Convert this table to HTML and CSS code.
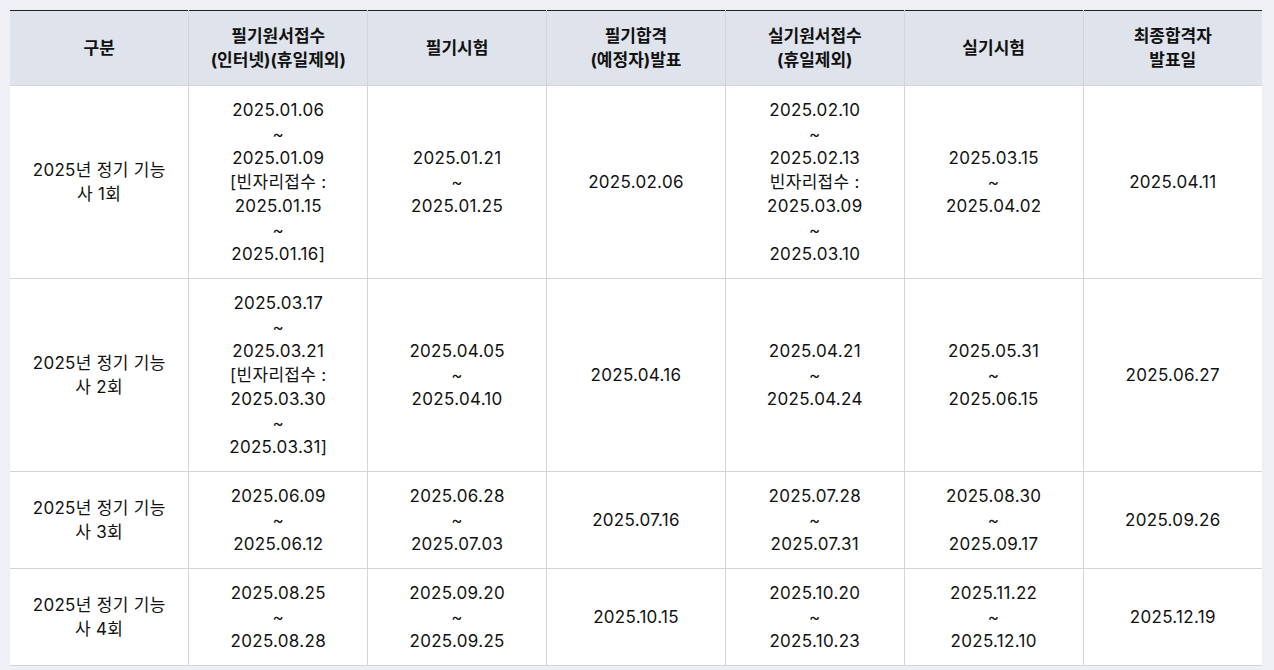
FILE: index.html
```html
<!DOCTYPE html>
<html lang="ko">
<head>
<meta charset="utf-8">
<link rel="stylesheet" href="styles.css">
</head>
<body>
<div class="wrap">
<table class="sched">
  <thead>
    <tr>
      <th>구분</th>
      <th>필기원서접수<br>(인터넷)(휴일제외)</th>
      <th>필기시험</th>
      <th>필기합격<br>(예정자)발표</th>
      <th>실기원서접수<br>(휴일제외)</th>
      <th>실기시험</th>
      <th>최종합격자<br>발표일</th>
    </tr>
  </thead>
  <tbody>
    <tr>
      <td>2025년 정기 기능사 1회</td>
      <td>2025.01.06<br>~<br>2025.01.09<br>[빈자리접수 : 2025.01.15<br>~<br>2025.01.16]</td>
      <td>2025.01.21<br>~<br>2025.01.25</td>
      <td>2025.02.06</td>
      <td>2025.02.10<br>~<br>2025.02.13<br>빈자리접수 : 2025.03.09<br>~<br>2025.03.10</td>
      <td>2025.03.15<br>~<br>2025.04.02</td>
      <td>2025.04.11</td>
    </tr>
    <tr>
      <td>2025년 정기 기능사 2회</td>
      <td>2025.03.17<br>~<br>2025.03.21<br>[빈자리접수 : 2025.03.30<br>~<br>2025.03.31]</td>
      <td>2025.04.05<br>~<br>2025.04.10</td>
      <td>2025.04.16</td>
      <td>2025.04.21<br>~<br>2025.04.24</td>
      <td>2025.05.31<br>~<br>2025.06.15</td>
      <td>2025.06.27</td>
    </tr>
    <tr>
      <td>2025년 정기 기능사 3회</td>
      <td>2025.06.09<br>~<br>2025.06.12</td>
      <td>2025.06.28<br>~<br>2025.07.03</td>
      <td>2025.07.16</td>
      <td>2025.07.28<br>~<br>2025.07.31</td>
      <td>2025.08.30<br>~<br>2025.09.17</td>
      <td>2025.09.26</td>
    </tr>
    <tr>
      <td>2025년 정기 기능사 4회</td>
      <td>2025.08.25<br>~<br>2025.08.28</td>
      <td>2025.09.20<br>~<br>2025.09.25</td>
      <td>2025.10.15</td>
      <td>2025.10.20<br>~<br>2025.10.23</td>
      <td>2025.11.22<br>~<br>2025.12.10</td>
      <td>2025.12.19</td>
    </tr>
  </tbody>
</table>
</div>
</body>
</html>
```

FILE: styles.css
```css
html, body {
  margin: 0;
  padding: 0;
  background: #eff0f5;
}
body {
  font-family: Inter, "Noto Sans CJK KR", sans-serif;
  color: #111;
}
.wrap {
  padding: 10px 12px 0 10px;
}
.sched {
  width: 1252px;
  table-layout: fixed;
  border-collapse: collapse;
  background: #fff;
  border-top: 1px solid #222;
  border-bottom: 1px solid #d4d4d8;
  font-size: 17px;
  line-height: 24px;
}
.sched th,
.sched td {
  text-align: center;
  vertical-align: middle;
  border-left: 1px solid #d4d4d8;
  border-bottom: 1px solid #d4d4d8;
  padding: 12px 20px;
}
.sched th:first-child,
.sched td:first-child {
  border-left: none;
}
.sched tbody tr:last-child td {
  border-bottom: none;
}
.sched th {
  background: #dfe3eb;
  font-weight: 700;
  padding: 13px 10px;
}
.sched td {
  font-weight: 400;
  letter-spacing: 0.3px;
}
```
